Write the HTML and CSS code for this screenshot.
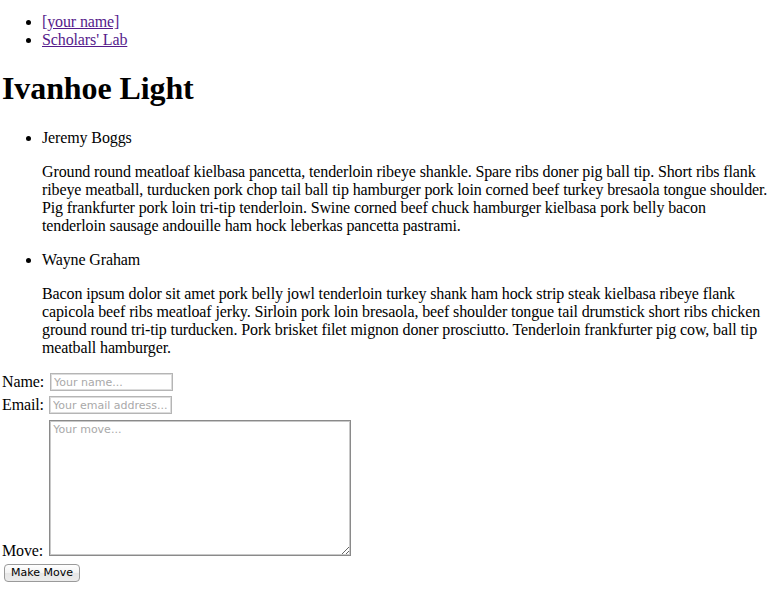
FILE: index.html
```html
<!DOCTYPE html>
<html>
<head>
<meta charset="utf-8">
<title>Ivanhoe Light</title>
<link rel="stylesheet" href="styles.css">
</head>
<body>
<ul class="nav">
  <li><a href="#">[your name]</a></li>
  <li><a href="#">Scholars' Lab</a></li>
</ul>
<h1 class="title">Ivanhoe Light</h1>
<ul class="moves">
  <li>Jeremy Boggs
    <p>Ground round meatloaf kielbasa pancetta, tenderloin ribeye shankle. Spare ribs doner pig ball tip. Short ribs flank ribeye meatball, turducken pork chop tail ball tip hamburger pork loin corned beef turkey bresaola tongue shoulder. Pig frankfurter pork loin tri-tip tenderloin. Swine corned beef chuck hamburger kielbasa pork belly bacon tenderloin sausage andouille ham hock leberkas pancetta pastrami.</p>
  </li>
  <li>Wayne Graham
    <p>Bacon ipsum dolor sit amet pork belly jowl tenderloin turkey shank ham hock strip steak kielbasa ribeye flank capicola beef ribs meatloaf jerky. Sirloin pork loin bresaola, beef shoulder tongue tail drumstick short ribs chicken ground round tri-tip turducken. Pork brisket filet mignon doner prosciutto. Tenderloin frankfurter pig cow, ball tip meatball hamburger.</p>
  </li>
</ul>
<form class="move-form" onsubmit="return false">
  <div class="row row-name">
    <label class="lbl">Name:</label>
    <input class="field field-name" type="text" placeholder="Your name...">
  </div>
  <div class="row row-email">
    <label class="lbl">Email:</label>
    <input class="field field-email" type="text" placeholder="Your email address...">
  </div>
  <div class="row row-move">
    <label class="lbl">Move:</label>
    <textarea class="area" placeholder="Your move..."></textarea>
  </div>
  <div class="row row-btn">
    <button class="btn" type="submit">Make Move</button>
  </div>
</form>
</body>
</html>
```
FILE: styles.css
```css
html, body {
  margin: 0;
  padding: 0;
  background: #fff;
}
body {
  margin: 0 2px;
  font-family: "Liberation Serif", "Times New Roman", serif;
  font-size: 16px;
  line-height: 18px;
  letter-spacing: -0.12px;
  color: #000;
  overflow: hidden;
}
.nav {
  margin: 13px 0 0;
  padding: 0 0 0 40px;
}
.nav a {
  color: #551a8b;
  text-decoration: underline;
}
.title {
  font-size: 32px;
  line-height: 37px;
  font-weight: bold;
  letter-spacing: -0.1px;
  margin: 21px 0 22px 0;
}
.moves {
  margin: 0 0 16px;
  padding: 0 0 0 40px;
}
.moves p {
  margin: 16px 0;
}
.move-form {
  margin: 0;
  padding-top: 0;
}
.row {
  display: flex;
  align-items: flex-end;
}
.row-email {
  margin-top: 5px;
}
.row-move {
  margin-top: 6px;
}
.row-btn {
  margin-top: 8px;
  padding-left: 2px;
}
.lbl {
  line-height: 18px;
  margin-right: 6px;
}
.row-email .lbl {
  margin-right: 5px;
}
.row-move .lbl {
  margin-right: 6px;
  position: relative;
  top: 4px;
}
.field, .area, .btn {
  font-family: "DejaVu Sans", "Lucida Grande", sans-serif;
  font-size: 11px;
  letter-spacing: 0;
  box-sizing: border-box;
}
.field {
  width: 123px;
  height: 18px;
  margin: 0;
  padding: 0 3px;
  border: 1px solid #b5b5b5;
  box-shadow: inset 0 0 0 1px #dcdcdc;
  background: #fff;
  outline: none;
}
.area {
  width: 302px;
  height: 136px;
  margin: 0;
  padding: 2px 3px;
  border: 1px solid #8a8a8a;
  box-shadow: inset 0 0 0 1px #c8c8c8;
  background: #fff;
  resize: both;
  outline: none;
}
.field::placeholder, .area::placeholder {
  color: #a9a9a9;
}
.btn {
  width: 76px;
  height: 18px;
  margin: 0;
  padding: 0;
  line-height: 16px;
  color: #000;
  border: 1px solid #9a9a9a;
  border-radius: 4px;
  background: linear-gradient(#ffffff, #f3f3f3 50%, #e6e6e6 51%, #ececec);
}
```
